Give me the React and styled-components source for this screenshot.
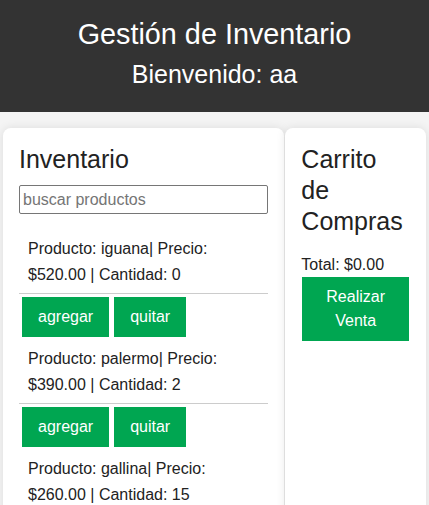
import React from "react";
import styled, { createGlobalStyle } from "styled-components";

const Global = createGlobalStyle`
  html, body { margin: 0; padding: 0; }
  body {
    background: #f4f4f4;
    font-family: "Liberation Sans", Arial, sans-serif;
    color: #333;
  }
  * { box-sizing: border-box; }
`;

const Header = styled.header`
  background: #333;
  color: #fff;
  text-align: center;
  padding: 17px 0 22px;
  height: 112px;
`;

const Title = styled.h1`
  margin: 0;
  font-size: 28.8px;
  font-weight: 400;
  line-height: 34px;
`;

const Welcome = styled.h2`
  margin: 8px 0 0;
  font-size: 25px;
  font-weight: 400;
  line-height: 30px;
`;

const Main = styled.main`
  display: grid;
  grid-template-columns: 2fr 1fr;
  gap: 1px;
  padding: 16px 3px 0 3px;
`;

const Card = styled.section`
  min-width: 0;
  background: #fff;
  border-radius: 8px;
  box-shadow: 0 0 10px rgba(0, 0, 0, 0.1);
  padding: 16px;
`;

const CardTitle = styled.h2`
  margin: 0;
  font-size: 25px;
  font-weight: 400;
  line-height: 31px;
  color: #222;
`;

const Search = styled.input`
  display: block;
  width: 100%;
  height: 29px;
  margin: 10px 0 13px;
  padding: 4px 3px;
  border: 1px solid #767676;
  border-radius: 2px;
  font-family: inherit;
  font-size: 16px;
  color: #333;
  &::placeholder { color: #757575; }
`;

const ProductText = styled.div`
  padding: 9px 9px 6px;
  border-bottom: 1px solid #ccc;
  font-size: 16px;
  line-height: 25.6px;
  color: #222;
`;

const Actions = styled.div`
  display: flex;
  gap: 5px;
  padding: 3px 3px 0;
`;

const GreenButton = styled.button`
  display: block;
  background: #00a651;
  color: #fff;
  border: none;
  border-radius: 0;
  font-family: inherit;
  font-size: 16px;
  line-height: ${(p) => (p.$wide ? "24px" : "22px")};
  padding: ${(p) => (p.$wide ? "8px 6px" : "9px 16px")};
  margin: ${(p) => (p.$wide ? "0 1px" : "0")};
  width: ${(p) => (p.$wide ? "calc(100% - 2px)" : "auto")};
  cursor: pointer;
`;

const Total = styled.p`
  margin: 19px 0 3px;
  font-size: 16px;
  line-height: 18.4px;
  color: #222;
`;

const products = [
  { name: "iguana", price: 520, qty: 0 },
  { name: "palermo", price: 390, qty: 2 },
  { name: "gallina", price: 260, qty: 15 },
  { name: "perro", price: 150, qty: 4 },
];

export default function App() {
  return (
    <>
      <Global />
      <Header>
        <Title>Gestión de Inventario</Title>
        <Welcome>Bienvenido: aa</Welcome>
      </Header>
      <Main>
        <Card>
          <CardTitle>Inventario</CardTitle>
          <Search placeholder="buscar productos" />
          {products.map((p) => (
            <div key={p.name}>
              <ProductText>
                Producto: {p.name}| Precio: ${p.price.toFixed(2)} | Cantidad: {p.qty}
              </ProductText>
              <Actions>
                <GreenButton>agregar</GreenButton>
                <GreenButton>quitar</GreenButton>
              </Actions>
            </div>
          ))}
        </Card>
        <Card>
          <CardTitle>Carrito de Compras</CardTitle>
          <Total>Total: $0.00</Total>
          <GreenButton $wide>Realizar Venta</GreenButton>
        </Card>
      </Main>
    </>
  );
}
